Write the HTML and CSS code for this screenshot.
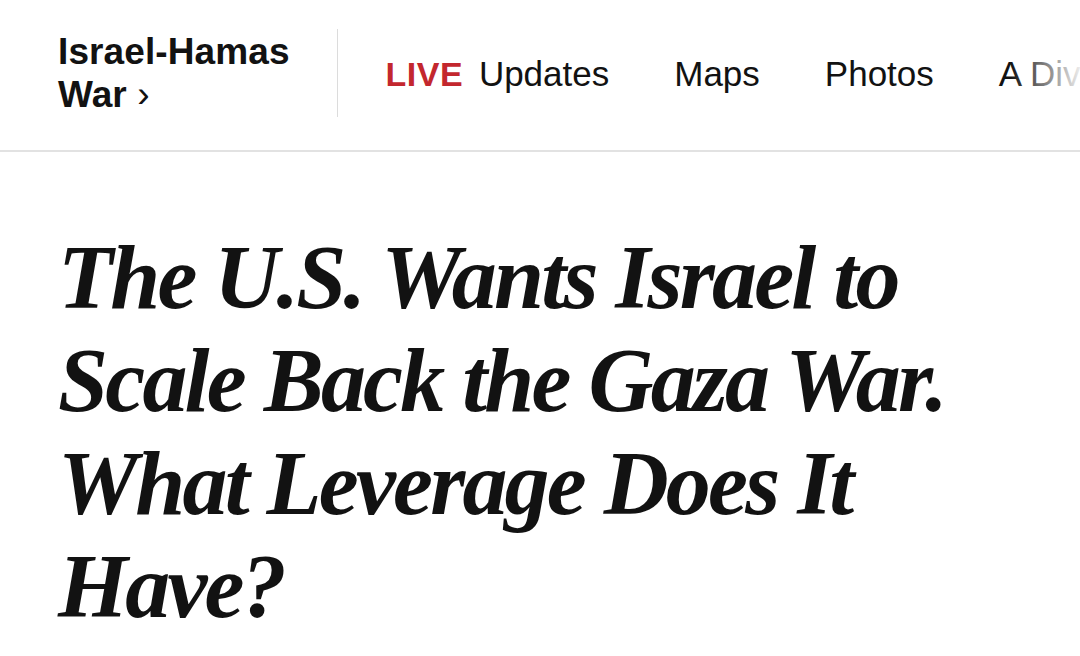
FILE: index.html
```html
<!DOCTYPE html>
<html lang="en">
<head>
<meta charset="utf-8">
<title>The U.S. Wants Israel to Scale Back the Gaza War</title>
<link rel="stylesheet" href="styles.css">
</head>
<body>
<header class="topbar">
  <a class="section" href="#"><span class="section-label">Israel-Hamas<br>War <span class="chev">›</span></span></a>
  <nav class="nav">
    <a class="nav-item" href="#"><span class="live">LIVE</span> Updates</a>
    <a class="nav-item" href="#">Maps</a>
    <a class="nav-item" href="#">Photos</a>
    <a class="nav-item" href="#">A Divided Israel</a>
  </nav>
</header>
<main class="article">
  <h1 class="headline">The U.S. Wants Israel to Scale Back the Gaza War. What Leverage Does It Have?</h1>
</main>
</body>
</html>
```

FILE: styles.css
```css
html, body {
  margin: 0;
  padding: 0;
  background: #ffffff;
}
body {
  width: 1080px;
  height: 656px;
  overflow: hidden;
  color: #121212;
  font-family: "Liberation Sans", Arial, sans-serif;
}
a {
  color: inherit;
  text-decoration: none;
}
.topbar {
  position: relative;
  display: flex;
  align-items: center;
  height: 146px;
  padding: 0 0 4px 58px;
  border-bottom: 2px solid #e2e2e2;
  overflow: hidden;
  white-space: nowrap;
}
.topbar::after {
  content: "";
  position: absolute;
  top: 0;
  right: 0;
  width: 70px;
  height: 100%;
  background: linear-gradient(to right, rgba(255,255,255,0), rgba(255,255,255,0.92));
}
.section {
  display: flex;
  align-items: center;
  height: 88px;
  padding-right: 47px;
  border-right: 1px solid #dcdcdc;
  font-size: 37px;
  font-weight: 700;
  line-height: 43px;
  letter-spacing: 0.1px;
}
.section-label {
  display: block;
}
.chev {
  font-weight: 400;
}
.nav {
  display: flex;
  gap: 65px;
  margin-left: 48px;
  margin-top: 2px;
  font-size: 35px;
  line-height: 40px;
}
.nav-item {
  flex: none;
}
.live {
  color: #c3272e;
  font-weight: 700;
  font-size: 34px;
  letter-spacing: 0.5px;
  margin-right: 6px;
}
.article {
  padding: 74px 58px 0 58px;
}
.headline {
  margin: 0;
  max-width: 980px;
  font-family: "Liberation Serif", "Times New Roman", serif;
  font-style: italic;
  font-weight: 700;
  font-size: 90px;
  line-height: 103px;
  letter-spacing: -2.8px;
  color: #121212;
}
```
